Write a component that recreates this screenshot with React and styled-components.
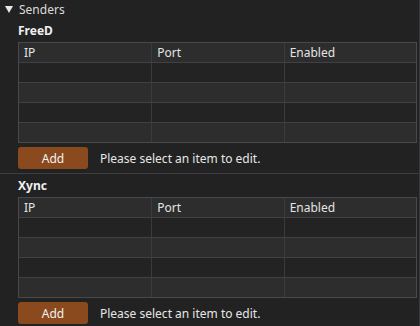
import React from 'react';
import styled, {createGlobalStyle} from 'styled-components'

const Global = createGlobalStyle`
  html, body {
    margin: 0;
    padding: 0;
    background: #222222;
  }
  body {
    font-family: "Noto Sans", "Open Sans", sans-serif;
    font-size: 12px;
    color: #e2e2e2;
  }
`

const Panel = styled.div`
  width: 420px;
  height: 326px;
  background: #222222;
  border-right: 1px solid #3a3a3e;
  box-sizing: border-box;
  overflow: hidden;
`

const GroupHeader = styled.div`
  display: flex;
  align-items: center;
  height: 18px;
  padding-left: 5px;
  gap: 6px;
  color: #dcdcdc;
`

const Arrow = styled.svg`
  width: 8px;
  height: 7px;
  fill: #e8e8e8;
`

const Section = styled.section`
  border-top: 1px solid ${p => p.first ? 'transparent' : '#3e3e40'};
  padding: 5px 2px 4px 18px;
`

const Title = styled.div`
  height: 18px;
  line-height: 14px;
  font-weight: bold;
  color: #f0f0f0;
`

const Table = styled.div`
  border: 1px solid #48484f;
`

const Row = styled.div`
  display: grid;
  grid-template-columns: 1fr 1fr 1fr;
  height: 19px;
  background: ${p => p.shade ? '#2d2d2d' : '#232323'};
  border-bottom: 1px solid #404046;
  &:last-child {
    border-bottom: none;
  }
`

const Cell = styled.div`
  display: flex;
  align-items: center;
  padding-left: 5px;
  border-left: 1px solid #3a3a40;
  color: #e4e4e4;
  &:first-child {
    border-left: none;
  }
`

const Footer = styled.div`
  display: flex;
  align-items: center;
  gap: 12px;
  margin-top: 4px;
`

const AddButton = styled.button`
  width: 70px;
  height: 22px;
  border: none;
  border-radius: 3px;
  background: #8b4a1e;
  color: #f2f2f2;
  font-family: inherit;
  font-size: 12px;
  padding: 0;
`

const Hint = styled.span`
  color: #e6e6e6;
`

const columns = ['IP', 'Port', 'Enabled']

const SenderTable = ({name, first}) => (
  <Section first={first}>
    <Title>{name}</Title>
    <Table>
      <Row shade>
        {columns.map(c => <Cell key={c}>{c}</Cell>)}
      </Row>
      {[0, 1, 2, 3].map(i => (
        <Row key={i} shade={i % 2 === 1}>
          {columns.map(c => <Cell key={c} />)}
        </Row>
      ))}
    </Table>
    <Footer>
      <AddButton>Add</AddButton>
      <Hint>Please select an item to edit.</Hint>
    </Footer>
  </Section>
)

export default function App() {
  return (
    <Panel>
      <Global />
      <GroupHeader>
        <Arrow viewBox="0 0 8 7"><path d="M0 0 L8 0 L4 7 Z" /></Arrow>
        <span>Senders</span>
      </GroupHeader>
      <SenderTable name="FreeD" first />
      <SenderTable name="Xync" />
    </Panel>
  )
}
